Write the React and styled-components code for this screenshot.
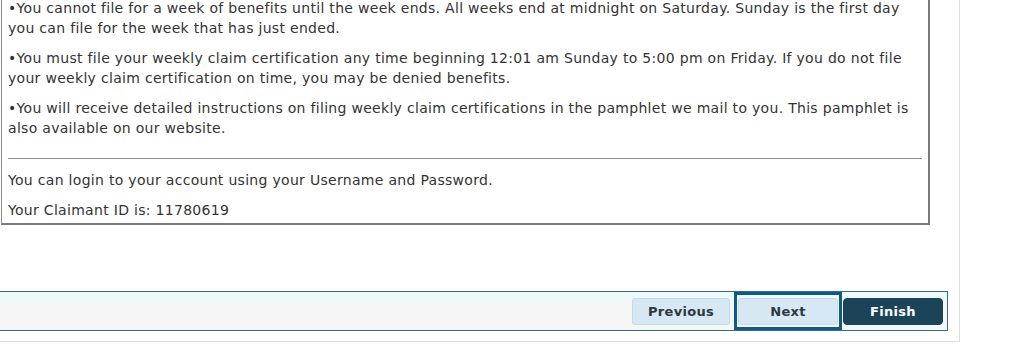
import React from 'react';
import styled, { createGlobalStyle } from 'styled-components';

const GlobalStyle = createGlobalStyle`
  html, body {
    margin: 0;
    padding: 0;
    background: #fff;
  }
  body {
    font-family: "DejaVu Sans", Verdana, sans-serif;
    font-size: 14px;
    letter-spacing: 0.3px;
    color: #333;
    overflow: hidden;
  }
`;

const Page = styled.div`
  width: 959px;
  height: 341px;
  border-right: 1px solid #dcdcdc;
  border-bottom: 1px solid #dcdcdc;
  overflow: hidden;
`;

const InfoBox = styled.div`
  width: 915px;
  margin: -13px 0 0 1px;
  padding: 10px 5px 3px 6px;
  border: 1px solid #8c8c8c;
  border-right: 2px solid #7a7a7a;
  border-bottom: 2px solid #7a7a7a;
`;

const Para = styled.p`
  margin: 0 0 ${(p) => (p.$last ? '0' : '10px')};
  line-height: 20px;
`;

const Rule = styled.hr`
  margin: 20px 1px 11px 0;
  border: 0;
  border-top: 1px solid #8e8e8e;
  height: 0;
`;

const ButtonBar = styled.div`
  display: flex;
  justify-content: flex-end;
  align-items: center;
  width: 948px;
  height: 40px;
  margin-top: 66px;
  padding-right: 4px;
  box-sizing: border-box;
  border: 1px solid #3b6a78;
  border-left: 0;
  background: linear-gradient(#eefafa 0, #eefafa 9px, #f6f6f6 10px, #f6f6f6 36px, #effafa 37px);
`;

const FocusFrame = styled.span`
  display: inline-flex;
  align-items: center;
  height: 38px;
  box-sizing: border-box;
  padding: 0 1px;
  margin: 0 1px 0 4px;
  border: 3px solid #0e5a87;
`;

const Button = styled.button`
  width: ${(p) => p.$width || 98}px;
  height: 27px;
  padding: 0;
  font-family: "DejaVu Sans", Verdana, sans-serif;
  font-size: 13px;
  font-weight: bold;
  letter-spacing: 0.3px;
  border-radius: ${(p) => (p.$primary ? '4px' : '3px')};
  border: 1px solid ${(p) => (p.$primary ? '#1b4459' : '#c6dbe7')};
  background: ${(p) => (p.$primary ? '#1b4459' : '#d6e8f3')};
  color: ${(p) => (p.$primary ? '#ffffff' : '#2b3840')};
  outline: none;
  cursor: pointer;
`;

const bullets = [
  'You cannot file for a week of benefits until the week ends. All weeks end at midnight on Saturday. Sunday is the first day you can file for the week that has just ended.',
  'You must file your weekly claim certification any time beginning 12:01 am Sunday to 5:00 pm on Friday. If you do not file your weekly claim certification on time, you may be denied benefits.',
  'You will receive detailed instructions on filing weekly claim certifications in the pamphlet we mail to you. This pamphlet is also available on our website.',
];

export default function App() {
  return (
    <>
      <GlobalStyle />
      <Page>
        <InfoBox>
          {bullets.map((b) => (
            <Para key={b}>•{b}</Para>
          ))}
          <Rule />
          <Para>You can login to your account using your Username and Password.</Para>
          <Para $last>Your Claimant ID is: 11780619</Para>
        </InfoBox>
        <ButtonBar>
          <Button $width={98}>Previous</Button>
          <FocusFrame>
            <Button $width={100}>Next</Button>
          </FocusFrame>
          <Button $primary $width={100}>Finish</Button>
        </ButtonBar>
      </Page>
    </>
  );
}
